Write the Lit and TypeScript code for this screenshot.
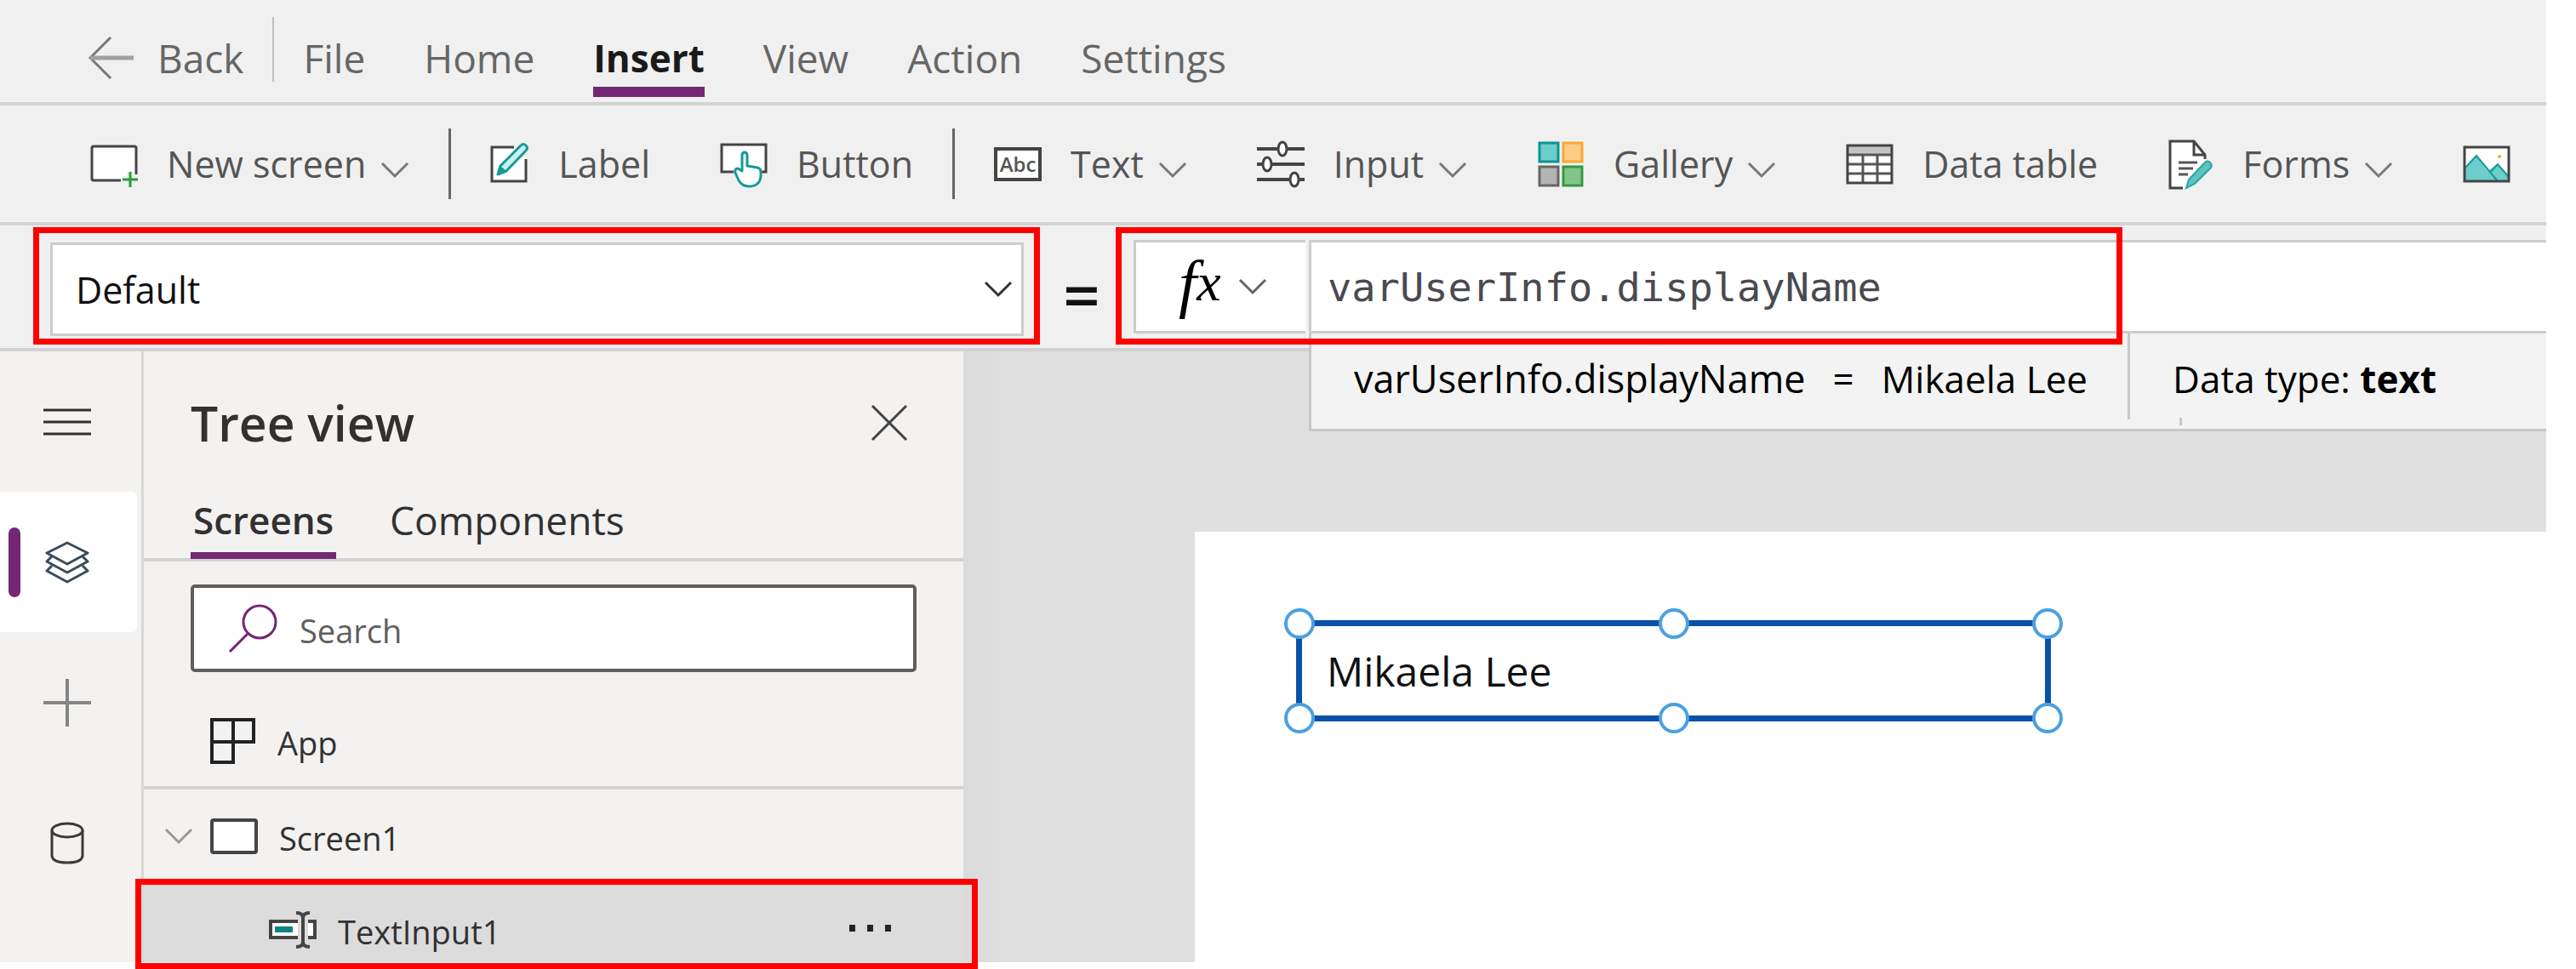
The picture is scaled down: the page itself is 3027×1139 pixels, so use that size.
import { LitElement, html, css, svg, nothing } from "lit";
import { customElement, property } from "lit/decorators.js";

const glyphs: Record<string, { w: number; h: number; body: unknown }> = {
  back: { w: 54, h: 52, body: svg`<path d="M26 2 2 26 26 50" fill="none" stroke="#777" stroke-width="3"/><path d="M2 26H53" stroke="#a0a0a0" stroke-width="5"/>` },
  chevron: { w: 34, h: 20, body: svg`<path d="M2 2 17 17 32 2" fill="none" stroke="currentColor" stroke-width="3"/>` },
  screen: {
    w: 56, h: 56, body: svg`<path d="M36 47H4Q2 47 2 45V9Q2 7 4 7H52Q54 7 54 9V39" fill="#fff"/><path d="M36 47H4Q2 47 2 45V9Q2 7 4 7H52Q54 7 54 9V40" fill="none" stroke="#444" stroke-width="3"/>
      <path d="M47 37V55M38 46H56" stroke="#f0f0f0" stroke-width="8"/><path d="M47 37V55M38 46H56" stroke="#2f9a3a" stroke-width="3"/>`,
  },
  label: {
    w: 46, h: 56, body: svg`<path d="M28 8H2V48H42V22" fill="#fff"/><path d="M28 8H2V48H42V22" fill="none" stroke="#444" stroke-width="3"/>
      <path d="M9 40 12 30 36 6Q39 3 42 6T42 12L19 36Z" fill="#cdeeed" stroke="#149a98" stroke-width="3" stroke-linejoin="round"/><path d="M9 40 12 30 19 36Z" fill="#149a98"/>`,
  },
  button: {
    w: 56, h: 56, body: svg`<path d="M17 37H2V5H54V37H46" fill="#fff"/><path d="M16 37H2V5H54V37H48" fill="none" stroke="#444" stroke-width="3"/>
      <path d="M26 18Q26 14 29 14T32 18V30L44 32Q48 33 48 37V42Q47 54 34 54Q26 54 22 47L18 38Q17 33 21 33L26 36Z" fill="#fff" stroke="#149a98" stroke-width="3" stroke-linejoin="round"/>`,
  },
  text: {
    w: 56, h: 40, body: svg`<rect x="2" y="2" width="52" height="36" fill="#fff" stroke="#444" stroke-width="4"/>
      <text x="28" y="29" text-anchor="middle" font-family="Open Sans, sans-serif" font-size="24" font-weight="600" fill="#555">Abc</text>`,
  },
  input: {
    w: 56, h: 56, body: svg`<path d="M0 10H56M0 28H56M0 46H56" stroke="#444" stroke-width="4"/>
      <g fill="#fff" stroke="#444" stroke-width="3"><ellipse cx="30" cy="10" rx="5" ry="8"/><ellipse cx="12" cy="28" rx="5" ry="8"/><ellipse cx="44" cy="46" rx="5" ry="8"/></g>`,
  },
  gallery: {
    w: 56, h: 56, body: svg`<g stroke-width="3"><rect x="3" y="3" width="22" height="22" fill="#6ccdca" stroke="#0f9391"/><rect x="31" y="3" width="22" height="22" fill="#fbcc85" stroke="#f7a935"/>
      <rect x="3" y="31" width="22" height="22" fill="#b4b4b4" stroke="#666"/><rect x="31" y="31" width="22" height="22" fill="#84c48a" stroke="#359a3f"/></g>`,
  },
  table: {
    w: 56, h: 48, body: svg`<rect x="2" y="2" width="52" height="44" fill="#fff"/><rect x="2" y="2" width="52" height="11" fill="#c4c4c4"/>
      <path d="M2 13H54M2 24H54M2 35H54M20 13V46M37 13V46" stroke="#555" stroke-width="3"/><rect x="2" y="2" width="52" height="44" fill="none" stroke="#444" stroke-width="3"/>`,
  },
  forms: {
    w: 54, h: 60, body: svg`<path d="M18 58H3V3H30L44 20V30L26 58Z" fill="#fff"/><path d="M18 58H3V3H31L44 19V24M31 3V19H44" fill="none" stroke="#444" stroke-width="3"/>
      <path d="M13 28H35M13 35H30M13 42H24" stroke="#555" stroke-width="3"/><path d="M22 58 25 48 44 28Q47 25 50 28T51 34L32 53Z" fill="#5cc4c1" stroke="#2aa5a2" stroke-width="2"/>`,
  },
  image: {
    w: 56, h: 44, body: svg`<rect x="2" y="2" width="52" height="40" fill="#fff"/><path d="M2 28 16 12 29 30 40 22 54 36V42H2Z" fill="#6ccdca"/><path d="M2 27 16 12 41 42M32 32 41 22 54 37" fill="none" stroke="#149a98" stroke-width="2"/>
      <circle cx="43" cy="13" r="2" fill="#f7a935"/><rect x="2" y="2" width="52" height="40" fill="none" stroke="#444" stroke-width="3"/>`,
  },
  menu: { w: 56, h: 32, body: svg`<path d="M0 2H56M0 16H56M0 30H56" stroke="#323130" stroke-width="3"/>` },
  layers: {
    w: 52, h: 50, body: svg`<g fill="none" stroke="#3b4a5c" stroke-width="3" stroke-linejoin="round"><path d="M26 2 50 14 26 27 2 14Z"/><path d="M8 18 2 24 26 37 50 24 44 18"/><path d="M8 29 2 35 26 48 50 35 44 29"/></g>`,
  },
  plus: { w: 56, h: 56, body: svg`<path d="M0 28H56M28 0V56" stroke="#858585" stroke-width="4"/>` },
  data: {
    w: 40, h: 50, body: svg`<g fill="none" stroke="#3b3a39" stroke-width="3"><ellipse cx="20" cy="10" rx="18" ry="8"/><path d="M2 10V40Q3 48 20 48T38 40V10"/></g>`,
  },
  close: { w: 44, h: 44, body: svg`<path d="M2 2 42 42M42 2 2 42" stroke="#444" stroke-width="3"/>` },
  search: { w: 58, h: 58, body: svg`<g fill="none" stroke="#742774" stroke-width="3"><circle cx="37" cy="21" r="19"/><path d="M23 35 2 56"/></g>` },
  app: { w: 54, h: 54, body: svg`<path d="M2 2H51V28H2ZM27 2V52H2V28" fill="none" stroke="#222" stroke-width="4"/>` },
  frame: { w: 56, h: 42, body: svg`<rect x="2" y="2" width="52" height="38" rx="2" fill="#fff" stroke="#444" stroke-width="4"/>` },
  field: {
    w: 56, h: 44, body: svg`<path d="M34 12H2V31H34M46 12H54V31H46" fill="#fff" stroke="#444" stroke-width="4"/><rect x="7" y="18" width="21" height="7" fill="#0a8583"/>
      <path d="M40 6V38M32 2Q40 2 40 8Q40 2 48 2M32 42Q40 42 40 36Q40 42 48 42" fill="none" stroke="#444" stroke-width="4"/>`,
  },
  dots: { w: 50, h: 8, body: svg`<g fill="#242424"><rect width="7" height="8"/><rect x="21" width="7" height="8"/><rect x="42" width="7" height="8"/></g>` },
};

const icon = (name: string) => {
  const g = glyphs[name];
  return html`<svg class="icon" width=${g.w} height=${g.h} viewBox="0 0 ${g.w} ${g.h}" aria-hidden="true">${g.body}</svg>`;
};

const shared = css`
  :host, * { box-sizing: border-box; }
  button, input, select { margin: 0; padding: 0; border: 0; border-radius: 0; background: none; font: inherit; color: inherit; outline: none; }
  a { color: inherit; text-decoration: none; }
  .icon { display: block; flex: none; }
`;

@customElement("menu-bar")
class MenuBar extends LitElement {
  static styles = [shared, css`
    :host { display: block; }
    .bar { display: flex; align-items: flex-end; height: 124px; padding: 0 0 6px 104px; border-bottom: 4px solid #d2d2d2; font-size: 46px; line-height: 68px; color: #666; }
    .link { display: flex; align-items: center; gap: 27px; border-bottom: 12px solid transparent; }
    .rule { width: 2px; height: 76px; margin: 0 34px 18px 34px; background: #c0c0c0; }
    .menus { display: flex; gap: 69px; }
    .active { color: #1a1a1a; font-weight: 700; font-size: 44px; border-color: #742774; }
  `];
  render() {
    return html`<nav class="bar">
      <a class="link" href="#back">${icon("back")}Back</a><span class="rule"></span>
      <div class="menus">${["File", "Home", "Insert", "View", "Action", "Settings"].map(
        (m) => html`<a class="link ${m === "Insert" ? "active" : ""}" href="#${m}">${m}</a>`)}</div>
    </nav>`;
  }
}

@customElement("insert-ribbon")
class InsertRibbon extends LitElement {
  static styles = [shared, css`
    :host { display: block; }
    .bar { display: flex; align-items: center; height: 141px; padding-left: 106px; border-bottom: 4px solid #d2d2d2; font-size: 43px; line-height: 60px; color: #555; overflow: hidden; }
    .group { display: flex; align-items: center; gap: 82px; }
    .tool { display: flex; align-items: center; gap: 34px; white-space: nowrap; }
    .caption { display: flex; align-items: center; gap: 17px; }
    .caption .icon { margin-top: 14px; color: #777; }
    .rule { flex: none; width: 3px; height: 83px; margin: 0 46px; background: #666; }
  `];
  private tool(name: string, label: string, drop = false) {
    return html`<button class="tool" aria-label=${label || "Media"}>${icon(name)}${label
      ? html`<span class="caption">${label}${drop ? icon("chevron") : nothing}</span>` : nothing}</button>`;
  }
  render() {
    return html`<div class="bar" role="toolbar">
      <div class="group">${this.tool("screen", "New screen", true)}</div><span class="rule"></span>
      <div class="group">${this.tool("label", "Label")}${this.tool("button", "Button")}</div><span class="rule"></span>
      <div class="group">
        ${this.tool("text", "Text", true)}${this.tool("input", "Input", true)}${this.tool("gallery", "Gallery", true)}
        ${this.tool("table", "Data table")}${this.tool("forms", "Forms", true)}${this.tool("image", "")}
      </div>
    </div>`;
  }
}

@customElement("formula-bar")
class FormulaBar extends LitElement {
  @property() formula = "varUserInfo.displayName";
  @property() result = "Mikaela Lee";
  static styles = [shared, css`
    :host { display: block; position: relative; z-index: 2; }
    .bar { display: flex; height: 148px; padding: 2px 0 0 39px; border-bottom: 4px solid #d2d2d2; font-size: 43px; color: #111; }
    .property { position: relative; display: flex; flex: 0 0 1183px; height: 138px; padding: 11px 12px 3px 13px; border: 7px solid #f00; }
    .choice { flex: 1; appearance: none; padding-left: 27px; border: 3px solid #ccc; background: #fff; }
    .arrow { position: absolute; right: 25px; top: 56px; color: #333; pointer-events: none; }
    .equals { width: 110px; padding: 12px 12px 0 0; font-size: 76px; font-weight: 600; line-height: 134px; text-align: center; }
    .formula { position: relative; display: flex; flex: 1; height: 110px; margin-top: 15px; }
    .fx { display: flex; align-items: center; gap: 20px; width: 202px; margin-right: 4px; padding-left: 50px; border: 3px solid #ccc; border-right: 0; background: #fff; color: #666; }
    .fn { padding-bottom: 8px; font: italic 76px/96px "Liberation Serif", serif; color: #000; }
    .var { font-size: 64px; line-height: 64px; vertical-align: 6px; }
    .code { flex: 1; min-width: 0; padding-left: 19px; border: 3px solid #ccc; border-right: 0; background: #fff; font-family: "DejaVu Sans Mono", monospace; font-size: 47px; color: #4a4a50; }
    .mark { position: absolute; left: -21px; top: -15px; width: 1183px; height: 138px; border: 7px solid #f00; pointer-events: none; }
    .hint { position: absolute; left: 206px; right: 0; top: 110px; display: flex; height: 115px; padding-left: 50px; border: 3px solid #c8c8c8; border-width: 0 0 3px 3px; background: #f3f3f3; font-size: 44px; line-height: 106px; color: #000; white-space: nowrap; }
    .expr { font-size: 45px; }
    .eq { margin: 0 32px; }
    .rule { width: 3px; height: 101px; margin: 0 50px 0 47px; background: #c8c8c8; }
    .type { position: relative; }
    .tick { position: absolute; left: 8px; bottom: 4px; width: 3px; height: 9px; background: #c8c8c8; }
  `];
  render() {
    return html`<div class="bar">
      <div class="property">
        <select class="choice" aria-label="Property"><option>Default</option></select>
        <span class="arrow">${icon("chevron")}</span>
      </div>
      <span class="equals">=</span>
      <div class="formula">
        <button class="fx" aria-label="Functions"><span class="fn">f<span class="var">x</span></span>${icon("chevron")}</button>
        <input class="code" aria-label="Formula" spellcheck="false" .value=${this.formula}>
        <div class="hint">
          <span class="expr">${this.formula}</span><span class="eq">=</span><span>${this.result}</span>
          <span class="rule"></span>
          <span class="type">Data type: <b>text</b><span class="tick"></span></span>
        </div>
        <span class="mark"></span>
      </div>
    </div>`;
  }
}

@customElement("side-rail")
class SideRail extends LitElement {
  static styles = [shared, css`
    :host { display: block; flex: none; width: 169px; border-right: 3px solid #d8d8d8; }
    .item { position: relative; display: flex; align-items: center; justify-content: center; width: 161px; height: 165px; padding-right: 4px; }
    .active { background: #fff; border-radius: 0 6px 6px 0; }
    .active::before { content: ""; position: absolute; left: 10px; top: 42px; width: 14px; height: 82px; border-radius: 7px; background: #742774; }
  `];
  render() {
    return html`<nav>${["menu", "layers", "plus", "data"].map(
      (n) => html`<button class="item ${n === "layers" ? "active" : ""}" aria-label=${n}>${icon(n)}</button>`)}</nav>`;
  }
}

@customElement("tree-view")
class TreeView extends LitElement {
  static styles = [shared, css`
    :host { display: block; position: relative; z-index: 1; flex: none; width: 963px; color: #323130; }
    .head { display: flex; align-items: center; justify-content: space-between; height: 160px; padding: 8px 65px 0 55px; }
    .title { margin: 0; font-size: 57px; line-height: 76px; font-weight: 600; }
    .tabs { display: flex; gap: 60px; height: 87px; padding-left: 55px; border-bottom: 4px solid #d2d2d2; font-size: 46px; line-height: 76px; }
    .tab { height: 84px; padding: 0 3px; border-bottom: 8px solid transparent; }
    .active { font-weight: 600; font-size: 44px; border-color: #742774; }
    .find { display: flex; align-items: center; gap: 26px; height: 103px; margin: 27px 55px 28px; padding-left: 40px; border: 4px solid #605e5c; border-radius: 5px; background: #fff; font-size: 38px; }
    .query { flex: 1; min-width: 0; padding-top: 4px; }
    .query::placeholder { color: #605e5c; opacity: 1; }
    .row { position: relative; display: flex; align-items: center; gap: 25px; height: 110px; padding-left: 78px; font-size: 38px; line-height: 54px; }
    .name { padding-top: 4px; }
    .global { border-bottom: 4px solid #d2d2d2; }
    .parent { padding-left: 24px; }
    .caret { margin-right: -5px; color: #999; }
    .child { height: 93px; padding: 17px 84px 0 147px; background: #dcdcdc; }
    .child::after { content: ""; position: absolute; inset: -5px -17px -8px -10px; border: 7px solid #f00; pointer-events: none; }
    .more { margin-left: auto; padding-bottom: 4px; }
  `];
  render() {
    return html`<div class="head"><h2 class="title">Tree view</h2><button aria-label="Close">${icon("close")}</button></div>
      <div class="tabs" role="tablist">
        <button class="tab active" role="tab" aria-selected="true">Screens</button>
        <button class="tab" role="tab" aria-selected="false">Components</button>
      </div>
      <label class="find">${icon("search")}<input class="query" type="text" placeholder="Search" aria-label="Search"></label>
      <div class="row global">${icon("app")}<span class="name">App</span></div>
      <div class="row parent"><button class="caret" aria-label="Collapse">${icon("chevron")}</button>${icon("frame")}<span class="name">Screen1</span></div>
      <div class="row child">${icon("field")}<span class="name">TextInput1</span><button class="more" aria-label="More">${icon("dots")}</button></div>`;
  }
}

@customElement("screen-canvas")
class ScreenCanvas extends LitElement {
  @property() value = "Mikaela Lee";
  static styles = [shared, css`
    :host { display: flex; flex: 1; min-width: 0; padding: 212px 0 0 272px; background: linear-gradient(90deg, #dadada, #e0e0e0 48px); }
    .screen { position: relative; flex: 1; background: #fff; overflow: hidden; }
    .control { position: absolute; left: 119px; top: 104px; width: 887px; height: 119px; }
    .entry { width: 100%; height: 100%; padding-left: 29px; border: 7px solid #0b51a8; font-size: 48px; color: #111; }
    .handle { position: absolute; width: 36px; height: 36px; border: 4px solid #4aa0e2; border-radius: 50%; background: #fff; transform: translate(-50%, -50%); }
    .t { top: 4px; }
    .b { top: 115px; }
    .l { left: 4px; }
    .m { left: 50%; }
    .r { left: 883px; }
  `];
  render() {
    return html`<div class="screen"><div class="control">
      <input class="entry" aria-label="TextInput1" .value=${this.value}>
      ${["t l", "t m", "t r", "b l", "b m", "b r"].map((p) => html`<span class="handle ${p}"></span>`)}
    </div></div>`;
  }
}

@customElement("app-root")
class AppRoot extends LitElement {
  static styles = css`
    :host { display: flex; flex-direction: column; box-sizing: border-box; min-height: 100vh; padding: 0 35px 8px 0; background: #fff; font-family: "Open Sans", "Noto Sans", sans-serif; }
    .chrome { background: #f0f0f0; }
    .work { display: flex; flex: 1; background: #f3f2f1; }
  `;
  render() {
    return html`<header class="chrome"><menu-bar></menu-bar><insert-ribbon></insert-ribbon><formula-bar></formula-bar></header>
      <main class="work"><side-rail></side-rail><tree-view></tree-view><screen-canvas></screen-canvas></main>`;
  }
}
